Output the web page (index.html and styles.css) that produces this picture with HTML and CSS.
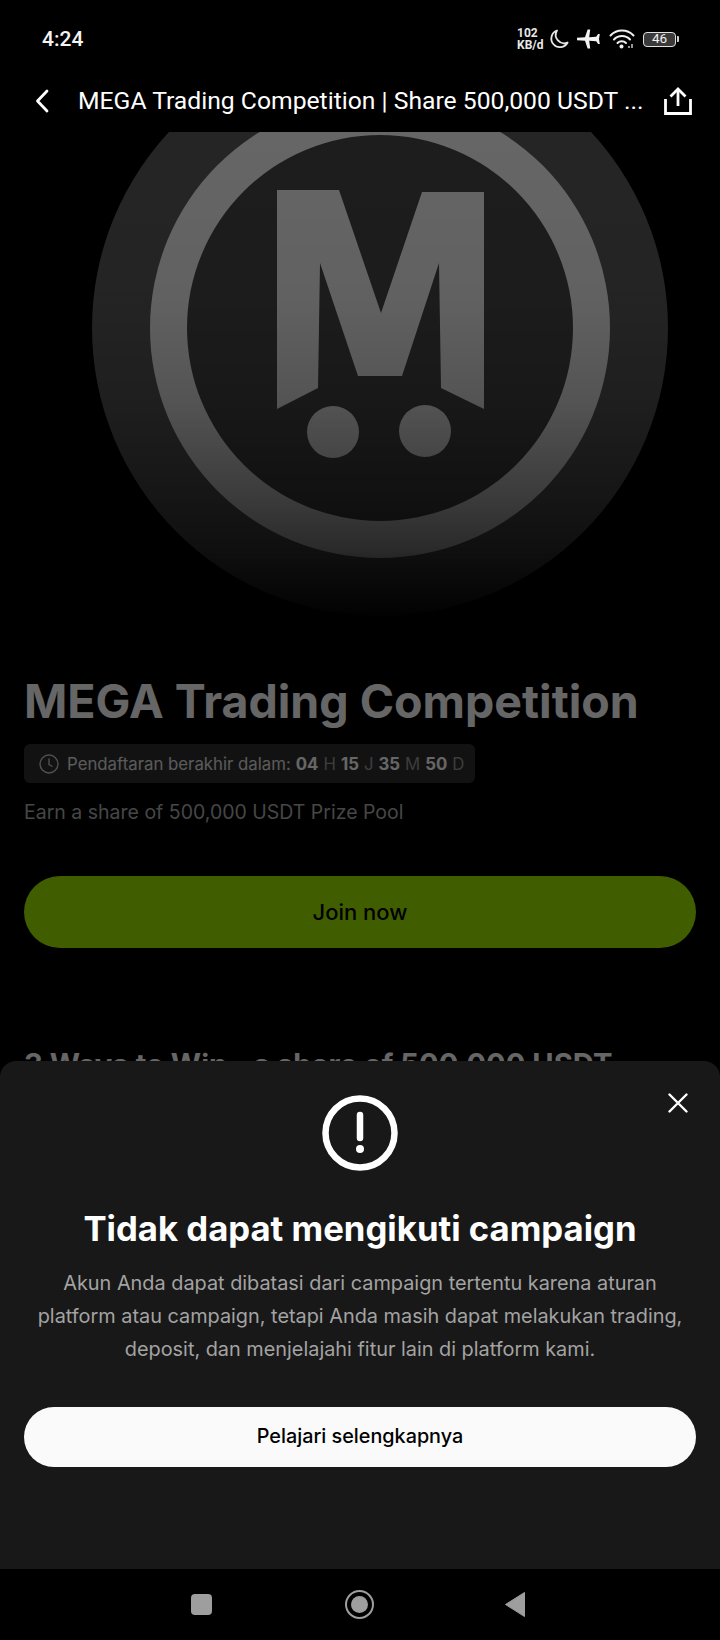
FILE: index.html
```html
<!DOCTYPE html>
<html lang="id">
<head>
<meta charset="utf-8">
<title>MEGA Trading Competition</title>
<link rel="stylesheet" href="styles.css">
</head>
<body>
<div class="phone">
  <header class="status">
    <span class="clock">4:24</span>
    <div class="status-icons">
      <span class="speed"><span>102</span><span>KB/d</span></span>
      <svg class="ic-moon" viewBox="0 0 20 20"><path d="M8 1.500a8.600 8.600 0 1 0 10.600 12A8.400 8.400 0 0 1 8 1.500z" fill="none" stroke="#e8e8e8" stroke-width="1.800" stroke-linejoin="round"/></svg>
      <svg class="ic-plane" viewBox="0 0 24 20"><path d="M0 8.800 8 8.200 10.600.4h2.600l-1 7.800 7-.5 1.900-2.600h1.700l-.8 4.900.8 4.900h-1.700l-1.900-2.600-7-.5 1 7.800h-2.600L8 11.800 0 11.200z" fill="#f2f2f2"/></svg>
      <svg class="ic-wifi" viewBox="0 0 26 20"><g fill="none" stroke="#f0f0f0" stroke-width="2" stroke-linecap="round"><path d="M1.500 6.500a16 16 0 0 1 23 0"/><path d="M5 10.500a11 11 0 0 1 16 0"/><path d="M8.500 14a6 6 0 0 1 8.500 0"/></g><circle cx="12.500" cy="17.500" r="2" fill="#f0f0f0"/><path d="M20 19v-2M23 19v-4" stroke="#bbb" stroke-width="1.600"/></svg>
      <span class="battery"><span class="battery-level">46</span></span>
      <span class="battery-nub"></span>
    </div>
  </header>

  <nav class="appbar">
    <svg class="ic-back" viewBox="0 0 14 24"><path d="M12 2 2.500 12l9.500 10" fill="none" stroke="#fff" stroke-width="2.800" stroke-linecap="round" stroke-linejoin="round"/></svg>
    <span class="appbar-title">MEGA Trading Competition | Share 500,000 USDT ...</span>
    <svg class="ic-share" viewBox="0 0 28 28"><g fill="none" stroke="#fff" stroke-width="2.800"><path d="M1.500 12v14.500h25V12"/><path d="M14 19V2.500"/><path d="M6.500 9.500 14 2l7.500 7.500"/></g></svg>
  </nav>

  <main class="page">
    <svg class="hero" viewBox="0 132 720 520" aria-hidden="true">
      <defs>
        <linearGradient id="heroFade" gradientUnits="userSpaceOnUse" x1="0" y1="132" x2="0" y2="640">
          <stop offset="0" stop-color="#000" stop-opacity="0"/>
          <stop offset=".33" stop-color="#000" stop-opacity=".05"/>
          <stop offset=".53" stop-color="#000" stop-opacity=".18"/>
          <stop offset=".72" stop-color="#000" stop-opacity=".42"/>
          <stop offset=".82" stop-color="#000" stop-opacity=".58"/>
          <stop offset=".92" stop-color="#000" stop-opacity=".85"/>
          <stop offset=".97" stop-color="#000" stop-opacity="1"/>
        </linearGradient>
      </defs>
      <circle cx="380" cy="328" r="288" fill="#5e5e5e"/>
      <circle cx="380" cy="328" r="230" fill="#fff"/>
      <circle cx="380" cy="328" r="193" fill="#4a4a4a"/>
      <path d="M277 190h62l42 123 41-121h62v217l-43-21-2-125-37 113h-44l-38-113-2 125-41 21z" fill="#fff"/>
      <ellipse cx="333" cy="432" rx="26" ry="26" fill="#fff"/>
      <ellipse cx="425" cy="431" rx="26" ry="26" fill="#fff"/>
      <rect x="0" y="132" width="720" height="520" fill="url(#heroFade)"/>
    </svg>

    <section class="intro">
      <h1 class="intro-title">MEGA Trading Competition</h1>
      <div class="countdown">
        <svg class="ic-clock" viewBox="0 0 20 20"><circle cx="10" cy="10" r="9" fill="none" stroke="#c8c8c8" stroke-width="1.400"/><path d="M10 4.500V10.500l3.500 2" fill="none" stroke="#c8c8c8" stroke-width="1.400"/></svg>
        <span class="countdown-label">Pendaftaran berakhir dalam:</span>
        <b>04</b><i>H</i><b>15</b><i>J</i><b>35</b><i>M</i><b>50</b><i>D</i>
      </div>
      <p class="intro-sub">Earn a share of 500,000 USDT Prize Pool</p>
      <button class="join">Join now</button>
      <h2 class="ways">3 Ways to Win <span class="ways-gap"></span>a share of 500,000 USDT</h2>
    </section>

    <div class="scrim"></div>

    <aside class="sheet">
      <svg class="ic-close" viewBox="0 0 20 20"><path d="M1.500 1.500l17 17M18.500 1.500l-17 17" stroke="#fff" stroke-width="2.400" stroke-linecap="round"/></svg>
      <svg class="ic-alert" viewBox="0 0 76 76"><circle cx="38" cy="38" r="34.500" fill="none" stroke="#fff" stroke-width="6.500"/><path d="M38 20v23" stroke="#fff" stroke-width="6.500" stroke-linecap="round"/><circle cx="38" cy="54" r="4" fill="#fff"/></svg>
      <h2 class="sheet-title">Tidak dapat mengikuti campaign</h2>
      <p class="sheet-text">Akun Anda dapat dibatasi dari campaign tertentu karena aturan platform atau campaign, tetapi Anda masih dapat melakukan trading, deposit, dan menjelajahi fitur lain di platform kami.</p>
      <button class="more">Pelajari selengkapnya</button>
    </aside>
  </main>

  <footer class="navbar">
    <span class="nav-square"></span>
    <span class="nav-home"><span class="nav-home-dot"></span></span>
    <svg class="nav-back" viewBox="0 0 20 25"><path d="M19.500.500v24L.500 12.500z" fill="#9e9e9e" stroke="#9e9e9e" stroke-linejoin="round"/></svg>
  </footer>
</div>
</body>
</html>
```
FILE: styles.css
```css
* { box-sizing: border-box; }

html, body {
  margin: 0;
  padding: 0;
  background: #000;
}

.phone {
  width: 720px;
  height: 1640px;
  display: flex;
  flex-direction: column;
  overflow: hidden;
  background: #000;
  color: #fff;
  font-family: Inter, "Liberation Sans", sans-serif;
}

/* status bar */
.status {
  height: 68px;
  flex: none;
  display: flex;
  align-items: center;
  justify-content: space-between;
  padding: 10px 41px 0 42px;
}

.clock {
  font: 500 21px/1 Roboto, sans-serif;
  color: #f4f4f4;
}

.status-icons {
  display: flex;
  align-items: center;
}

.speed {
  display: flex;
  flex-direction: column;
  width: 27px;
  font: 700 12px/12px Roboto, sans-serif;
  color: #e8e8e8;
  margin-right: 5px;
  white-space: nowrap;
}

.ic-moon { width: 20px; height: 20px; margin-right: 8px; }
.ic-plane { width: 24px; height: 20px; margin-right: 8px; }
.ic-wifi { width: 26px; height: 20px; margin-right: 8px; }

.battery {
  width: 33px;
  height: 15px;
  border: 1.500px solid #e0e0e0;
  border-radius: 4px;
  background: #3a3a3a;
  display: flex;
  align-items: center;
  justify-content: center;
}

.battery-level {
  font: 400 13.500px/1 Roboto, sans-serif;
  color: #f0f0f0;
}

.battery-nub {
  width: 2px;
  height: 6px;
  margin-left: 1px;
  background: #cfcfcf;
  border-radius: 0 1px 1px 0;
}

/* title row */
.appbar {
  height: 64px;
  flex: none;
  display: flex;
  align-items: center;
  padding: 2px 28px 0 35px;
}

.ic-back { width: 14px; height: 24px; flex: none; }

.appbar-title {
  flex: 1;
  margin-left: 29px;
  font: 400 24.700px/1 Roboto, sans-serif;
  white-space: nowrap;
}

.ic-share { width: 28px; height: 28px; flex: none; }

/* campaign page behind the dialog */
.page {
  position: relative;
  flex: 1;
  overflow: hidden;
}

.hero {
  display: block;
  width: 720px;
  height: 520px;
}

.intro {
  padding: 21px 24px 0;
}

.intro-title {
  margin: 0;
  font-size: 46.500px;
  line-height: 56px;
  font-weight: 700;
  white-space: nowrap;
}

.countdown {
  width: 451px;
  height: 39px;
  margin-top: 15px;
  padding: 0 15px;
  display: flex;
  align-items: center;
  gap: 5px;
  border-radius: 6px;
  background: #2e2e2e;
  color: #e2e2e2;
  font-size: 16.800px;
  white-space: nowrap;
}

.ic-clock { width: 20px; height: 20px; flex: none; margin-right: 3px; }
.countdown b { font-weight: 700; color: #fff; }
.countdown i { font-style: normal; color: #999; }

.intro-sub {
  margin: 14px 0 0;
  font-size: 19.500px;
  line-height: 30px;
  color: #b0b0b0;
}

.join {
  display: block;
  width: 672px;
  height: 72px;
  margin-top: 49px;
  border: 0;
  border-radius: 36px;
  background: #a1eb00;
  color: #000;
  font: 500 22px/1 Inter, sans-serif;
}

.ways {
  margin: 97px 0 0;
  font-size: 29.200px;
  line-height: 40px;
  font-weight: 700;
  white-space: nowrap;
}

.ways-gap {
  display: inline-block;
  width: 19px;
}

.scrim {
  position: absolute;
  inset: 0;
  background: rgba(0, 0, 0, .6);
}

/* dialog sheet */
.sheet {
  position: absolute;
  left: 0;
  right: 0;
  bottom: 0;
  height: 508px;
  padding: 34px 24px 0;
  display: flex;
  flex-direction: column;
  align-items: center;
  background: #181818;
  border-radius: 16px 16px 0 0;
}

.ic-close {
  position: absolute;
  top: 32px;
  right: 32px;
  width: 20px;
  height: 20px;
}

.ic-alert { width: 76px; height: 76px; flex: none; }

.sheet-title {
  margin: 35px 0 0;
  font-size: 34.700px;
  line-height: 44px;
  font-weight: 700;
  white-space: nowrap;
}

.sheet-text {
  margin: 17px 0 0;
  font-size: 19.870px;
  line-height: 33px;
  color: #a3a3a3;
  text-align: center;
}

.more {
  width: 672px;
  height: 60px;
  margin-top: 41px;
  border: 0;
  border-radius: 30px;
  background: #fafafa;
  color: #000;
  font: 500 19.800px/1 Inter, sans-serif;
}

/* system navigation */
.navbar {
  height: 71px;
  flex: none;
  display: flex;
  align-items: center;
  background: #000;
  padding: 0 0 0 191px;
}

.nav-square {
  width: 21px;
  height: 21px;
  border-radius: 4px;
  background: #9e9e9e;
}

.nav-home {
  width: 29px;
  height: 29px;
  margin-left: 133px;
  border: 2px solid #9e9e9e;
  border-radius: 50%;
  display: flex;
  align-items: center;
  justify-content: center;
}

.nav-home-dot {
  width: 17px;
  height: 17px;
  border-radius: 50%;
  background: #9e9e9e;
}

.nav-back {
  width: 20px;
  height: 25px;
  margin-left: 131px;
}
```
